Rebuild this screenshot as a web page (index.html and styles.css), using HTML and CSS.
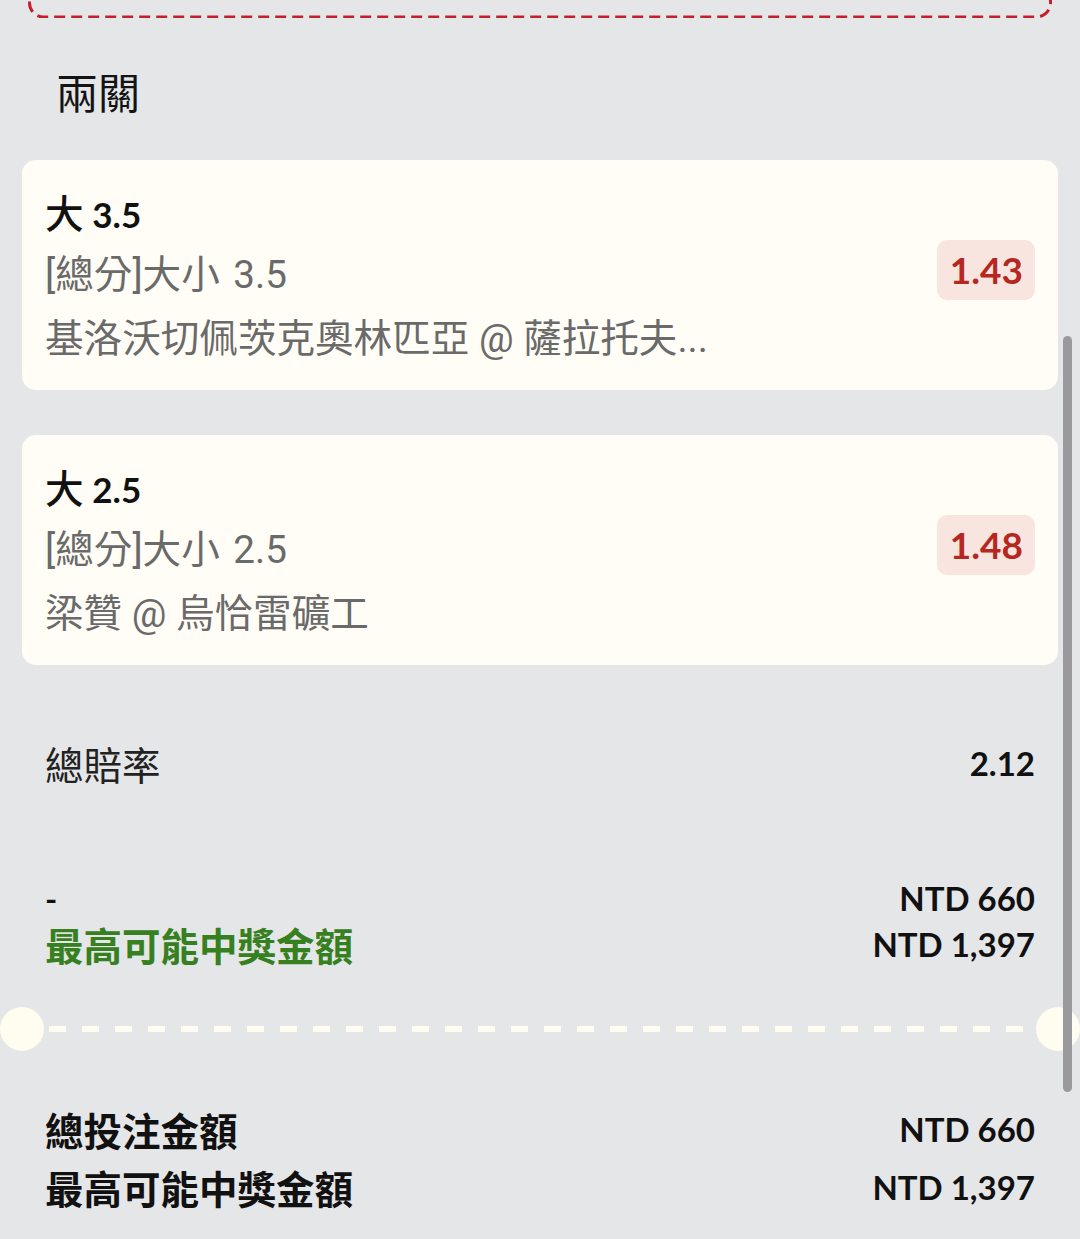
FILE: index.html
```html
<!DOCTYPE html>
<html lang="zh-Hant">
<head>
<meta charset="utf-8">
<title>兩關</title>
<link rel="stylesheet" href="styles.css">
</head>
<body>
<div class="page">
  <svg class="prev-box" width="1080" height="18" viewBox="0 0 1080 18">
    <rect x="29.5" y="-60" width="1021" height="77" rx="14" ry="14" fill="none" stroke="#c4202b" stroke-width="3" stroke-dasharray="11 6"/>
  </svg>

  <h2 class="title">兩關</h2>

  <div class="cards">
    <div class="card">
      <div class="card-info">
        <div class="sel">大 <span class="num">3.5</span></div>
        <div class="market">[總分]大小 3.5</div>
        <div class="match">基洛沃切佩茨克奧林匹亞 @ 薩拉托夫...</div>
      </div>
      <div class="odds">1.43</div>
    </div>
    <div class="card">
      <div class="card-info">
        <div class="sel">大 <span class="num">2.5</span></div>
        <div class="market">[總分]大小 2.5</div>
        <div class="match">梁贊 @ 烏恰雷礦工</div>
      </div>
      <div class="odds">1.48</div>
    </div>
  </div>

  <div class="row total-odds">
    <span class="label">總賠率</span>
    <span class="num">2.12</span>
  </div>

  <div class="summary">
    <div class="row">
      <span class="num">-</span>
      <span class="num">NTD 660</span>
    </div>
    <div class="row">
      <span class="label win">最高可能中獎金額</span>
      <span class="num">NTD 1,397</span>
    </div>
  </div>

  <div class="divider">
    <span class="notch"></span>
    <span class="dash"></span>
    <span class="notch"></span>
  </div>

  <div class="totals">
    <div class="row">
      <span class="label strong">總投注金額</span>
      <span class="num">NTD 660</span>
    </div>
    <div class="row">
      <span class="label strong">最高可能中獎金額</span>
      <span class="num">NTD 1,397</span>
    </div>
  </div>

  <div class="scrollbar"></div>
</div>
</body>
</html>
```

FILE: styles.css
```css
html, body {
  margin: 0;
  padding: 0;
}

body {
  background: #e5e6e8;
  font-family: "Noto Sans CJK TC", "Noto Sans CJK SC", "Noto Sans", sans-serif;
  color: #111;
  width: 1080px;
  height: 1239px;
  overflow: hidden;
}

.page {
  position: relative;
  width: 1080px;
  height: 1239px;
}

.prev-box {
  display: block;
}

.title {
  margin: 45px 0 0 56px;
  font-size: 42px;
  line-height: 56px;
  font-weight: 400;
  color: #141414;
}

.cards {
  margin: 41px 22px 0;
  display: flex;
  flex-direction: column;
  gap: 45px;
}

.card {
  background: #fffdf6;
  border-radius: 14px;
  padding: 19px 23px 19px 23px;
  display: flex;
  align-items: center;
  justify-content: space-between;
}

.card-info {
  display: flex;
  flex-direction: column;
}

.card-info > div {
  height: 64px;
  line-height: 64px;
  font-size: 38.6px;
  white-space: nowrap;
}

.sel {
  font-weight: 500;
  color: #111;
}

.sel .num {
  font-family: "Lato", sans-serif;
  font-weight: 700;
  font-size: 35px;
}

.market, .match {
  font-family: "Roboto", "Noto Sans CJK TC", sans-serif;
  color: #6a6a6a;
}

.market {
  word-spacing: 4px;
}

.odds {
  margin-bottom: 10px;
  background: #f8e5df;
  color: #b5271f;
  border-radius: 10px;
  height: 60px;
  line-height: 60px;
  padding: 0 12px 0 13px;
  font-family: "Lato", sans-serif;
  font-weight: 700;
  font-size: 37px;
}

.row {
  display: flex;
  justify-content: space-between;
  align-items: center;
  padding: 0 45px;
}

.num {
  font-family: "Lato", sans-serif;
  font-weight: 700;
  font-size: 33px;
  color: #111;
}

.label {
  font-size: 38.5px;
  color: #222;
}

.total-odds {
  margin-top: 66px;
  height: 64px;
}

.summary {
  margin-top: 80px;
}

.summary .row {
  height: 46px;
}

.win {
  color: #37801f;
  font-weight: 700;
}

.divider {
  margin-top: 40px;
  display: flex;
  align-items: center;
  height: 44px;
}

.notch {
  width: 44px;
  height: 44px;
  border-radius: 50%;
  background: #fffdf0;
  flex: none;
}

.dash {
  flex: 1;
  height: 6px;
  margin: 0 5px;
  background: repeating-linear-gradient(to right, #fffdf2 0 17px, transparent 17px 33px);
}

.totals {
  margin-top: 49px;
}

.totals .row {
  height: 58px;
}

.strong {
  font-weight: 700;
  color: #111;
}

.scrollbar {
  position: absolute;
  left: 1063px;
  top: 336px;
  width: 9px;
  height: 756px;
  border-radius: 5px;
  background: #9a9a9c;
}
```
